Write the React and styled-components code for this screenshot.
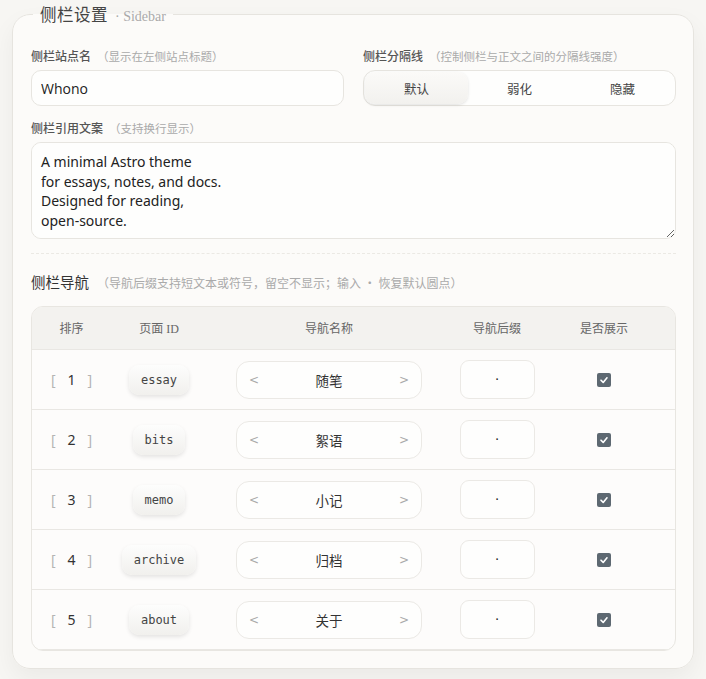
import React, { useState } from "react";
import styled, { createGlobalStyle } from "styled-components";

const GlobalStyle = createGlobalStyle`
  body {
    margin: 0;
    background: #f7f6f3;
    font-family: "Liberation Serif", "Noto Sans CJK SC", serif;
    color: #333;
  }
`;

const Panel = styled.fieldset`
  margin: 2px 12px 12px;
  padding: 21px 17px 17px 18px;
  border: 1px solid #e6e4df;
  border-radius: 18px;
  background: #fcfbf9;
  box-shadow: 0 10px 24px rgba(0, 0, 0, 0.05);
`;

const Legend = styled.legend`
  padding: 0 7px;
  margin-left: 2px;
  display: flex;
  align-items: baseline;
  gap: 7px;
`;

const LegendTitle = styled.span`
  font-family: "Noto Sans CJK SC", sans-serif;
  font-size: 16.5px;
  color: #444;
  letter-spacing: 0.5px;
`;

const LegendSub = styled.span`
  font-size: 14px;
  color: #aaa;
`;

const TwoCols = styled.div`
  display: grid;
  grid-template-columns: 1fr 1fr;
  gap: 19px;
`;

const Field = styled.div`
  display: flex;
  flex-direction: column;
  margin-top: ${(p) => p.$top || 0}px;
`;

const Label = styled.div`
  font-family: "Noto Sans CJK SC", sans-serif;
  font-size: 12px;
  font-weight: 500;
  color: #555;
  margin-bottom: 5px;
  line-height: 18px;
`;

const Hint = styled.span`
  font-weight: 400;
  color: #aaa;
  font-size: 11.5px;
  margin-left: 6px;
`;

const TextInput = styled.input`
  box-sizing: border-box;
  height: 36px;
  border: 1px solid #e7e5e0;
  border-radius: 10px;
  background: #fefefd;
  padding: 0 9px;
  font-family: "Open Sans", "Noto Sans", sans-serif;
  font-size: 14px;
  color: #222;
  outline: none;
`;

const Segmented = styled.div`
  box-sizing: border-box;
  height: 36px;
  border: 1px solid #e7e5e0;
  border-radius: 12px;
  background: #fefefd;
  display: grid;
  grid-template-columns: repeat(3, 1fr);
  padding: 1px;
`;

const Segment = styled.button`
  border: none;
  border-radius: 10px;
  font-family: "Noto Sans CJK SC", sans-serif;
  font-size: 12.5px;
  color: #444;
  cursor: pointer;
  background: ${(p) => (p.$active ? "linear-gradient(#fbfaf8, #f2f1ee)" : "transparent")};
  box-shadow: ${(p) => (p.$active ? "0 1px 3px rgba(0,0,0,0.12)" : "none")};
`;

const Quote = styled.textarea`
  box-sizing: border-box;
  height: 97px;
  border: 1px solid #e7e5e0;
  border-radius: 10px;
  background: #fefefd;
  padding: 9px 9px;
  font-family: "Noto Sans", "DejaVu Sans", sans-serif;
  font-size: 14px;
  line-height: 19.6px;
  color: #222;
  resize: vertical;
  outline: none;
`;

const Divider = styled.div`
  margin: 14px 0 0;
  border-top: 1px dashed #ebe9e4;
`;

const SectionHead = styled.div`
  margin: 17px 0 14px;
  display: flex;
  align-items: baseline;
`;

const SectionTitle = styled.span`
  font-family: "Noto Sans CJK SC", sans-serif;
  font-size: 14.5px;
  color: #333;
`;

const SectionHint = styled.span`
  font-family: "Noto Sans CJK SC", sans-serif;
  font-size: 12px;
  color: #aaa;
  margin-left: 8px;
`;

const Table = styled.div`
  border: 1px solid #e8e6e1;
  border-radius: 12px;
  overflow: hidden;
  background: #fdfcfb;
`;

const Row = styled.div`
  display: grid;
  grid-template-columns: 79px 96px 244px 92px 1fr;
  align-items: center;
  height: ${(p) => (p.$head ? 42 : 59)}px;
  background: ${(p) => (p.$head ? "#f3f2ef" : "transparent")};
  border-bottom: 1px solid #e9e7e3;
  padding-right: 10px;
`;

const HeadCell = styled.div`
  text-align: center;
  font-size: 12px;
  color: #666;
`;

const Cell = styled.div`
  display: flex;
  justify-content: center;
  align-items: center;
`;

const Order = styled.div`
  display: flex;
  gap: 12px;
  font-family: "Noto Sans", sans-serif;
  font-size: 14px;
  color: #333;
  span {
    color: #b4b4b4;
  }
`;

const PageId = styled.div`
  height: 30px;
  padding: 0 12px;
  display: flex;
  align-items: center;
  border-radius: 10px;
  background: linear-gradient(#fdfdfc, #f1f0ed);
  box-shadow: 0 2px 4px rgba(0, 0, 0, 0.1);
  font-family: "DejaVu Sans Mono", monospace;
  font-size: 12px;
  color: #444;
`;

const Stepper = styled.div`
  box-sizing: border-box;
  width: 186px;
  height: 38px;
  border: 1px solid #ebe9e5;
  border-radius: 13px;
  background: #fefefd;
  display: flex;
  align-items: center;
  justify-content: space-between;
  padding: 0 12px;
  font-family: "Noto Sans CJK SC", sans-serif;
  font-size: 13.5px;
  color: #333;
`;

const Arrow = styled.span`
  font-family: "DejaVu Sans", sans-serif;
  font-size: 12px;
  color: #aaa;
`;

const Suffix = styled.div`
  box-sizing: border-box;
  width: 75px;
  height: 39px;
  border: 1px solid #ebe9e5;
  border-radius: 9px;
  background: #fefefd;
  display: flex;
  align-items: center;
  justify-content: center;
  font-size: 14px;
  color: #222;
`;

const Check = styled.div`
  width: 14px;
  height: 14px;
  border-radius: 2px;
  background: #5d6871;
  display: flex;
  align-items: center;
  justify-content: center;
`;

const navItems = [
  { id: "essay", name: "随笔" },
  { id: "bits", name: "絮语" },
  { id: "memo", name: "小记" },
  { id: "archive", name: "归档" },
  { id: "about", name: "关于" },
];

const dividerOptions = ["默认", "弱化", "隐藏"];

export default function App() {
  const [divider, setDivider] = useState("默认");

  return (
    <>
      <GlobalStyle />
      <Panel>
        <Legend>
          <LegendTitle>侧栏设置</LegendTitle>
          <LegendSub>· Sidebar</LegendSub>
        </Legend>

        <TwoCols>
          <Field>
            <Label>
              侧栏站点名<Hint>（显示在左侧站点标题）</Hint>
            </Label>
            <TextInput defaultValue="Whono" />
          </Field>
          <Field>
            <Label>
              侧栏分隔线<Hint>（控制侧栏与正文之间的分隔线强度）</Hint>
            </Label>
            <Segmented>
              {dividerOptions.map((opt) => (
                <Segment
                  key={opt}
                  $active={divider === opt}
                  onClick={() => setDivider(opt)}
                >
                  {opt}
                </Segment>
              ))}
            </Segmented>
          </Field>
        </TwoCols>

        <Field $top={13}>
          <Label>
            侧栏引用文案<Hint>（支持换行显示）</Hint>
          </Label>
          <Quote
            defaultValue={
              "A minimal Astro theme\nfor essays, notes, and docs.\nDesigned for reading,\nopen-source."
            }
          />
        </Field>

        <Divider />

        <SectionHead>
          <SectionTitle>侧栏导航</SectionTitle>
          <SectionHint>
            （导航后缀支持短文本或符号，留空不显示；输入 · 恢复默认圆点）
          </SectionHint>
        </SectionHead>

        <Table>
          <Row $head>
            <HeadCell>排序</HeadCell>
            <HeadCell>页面 ID</HeadCell>
            <HeadCell>导航名称</HeadCell>
            <HeadCell>导航后缀</HeadCell>
            <HeadCell>是否展示</HeadCell>
          </Row>
          {navItems.map((item, i) => (
            <Row key={item.id}>
              <Cell>
                <Order>
                  <span>[</span>
                  {i + 1}
                  <span>]</span>
                </Order>
              </Cell>
              <Cell>
                <PageId>{item.id}</PageId>
              </Cell>
              <Cell>
                <Stepper>
                  <Arrow>&lt;</Arrow>
                  {item.name}
                  <Arrow>&gt;</Arrow>
                </Stepper>
              </Cell>
              <Cell>
                <Suffix>·</Suffix>
              </Cell>
              <Cell>
                <Check>
                  <svg width="10" height="10" viewBox="0 0 10 10">
                    <path
                      d="M2 5.2 L4.2 7.4 L8 2.8"
                      fill="none"
                      stroke="#fff"
                      strokeWidth="1.6"
                      strokeLinecap="round"
                      strokeLinejoin="round"
                    />
                  </svg>
                </Check>
              </Cell>
            </Row>
          ))}
        </Table>
      </Panel>
    </>
  );
}
